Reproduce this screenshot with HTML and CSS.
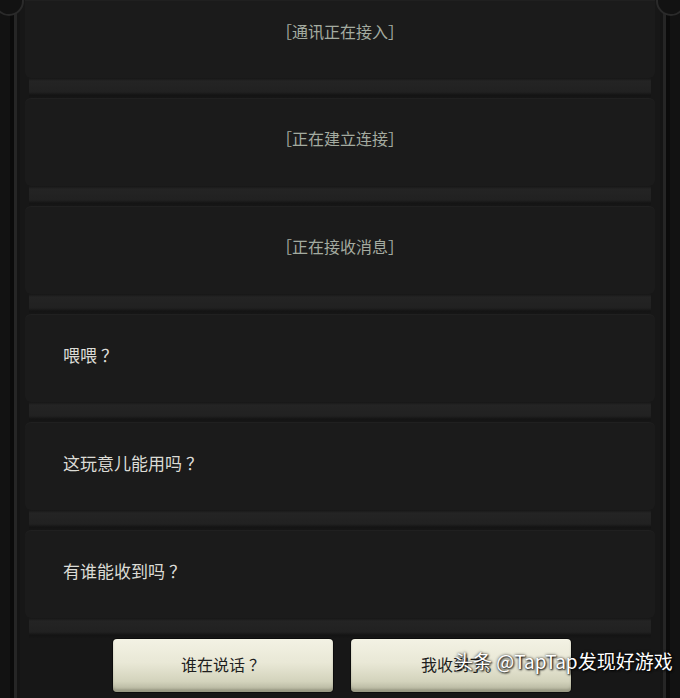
FILE: index.html
```html
<!DOCTYPE html>
<html lang="zh-CN">
    <head>
        <meta charset="UTF-8">
        <meta name="viewport" content="width=device-width, initial-scale=1.0">
        <title>通讯</title>
        <link rel="stylesheet" href="styles.css">
    </head>
    <body>
        <div class="frame">
            <div class="corner corner-left"></div>
            <div class="corner corner-right"></div>

            <div class="log">
                <div class="entry entry-first status"><span>［通讯正在接入］</span></div>
                <div class="band"></div>
                <div class="entry status"><span>［正在建立连接］</span></div>
                <div class="band"></div>
                <div class="entry status"><span>［正在接收消息］</span></div>
                <div class="band"></div>
                <div class="entry message"><span>喂喂<i class="mark">？</i></span></div>
                <div class="band"></div>
                <div class="entry message"><span>这玩意儿能用吗<i class="mark">？</i></span></div>
                <div class="band"></div>
                <div class="entry message"><span>有谁能收到吗<i class="mark">？</i></span></div>
                <div class="band"></div>
            </div>

            <div class="choices">
                <button class="choice">谁在说话<i class="mark">？</i></button>
                <button class="choice">我收到了<i class="mark mark-dot">。</i></button>
            </div>
        </div>

        <div class="watermark">头条 @TapTap发现好游戏</div>
    </body>
</html>
```

FILE: styles.css
```css
/* 通讯面板 */
body {
    margin: 0;
    height: 698px;
    overflow: hidden;
    background-color: #121212;
    font-family: "Noto Sans CJK SC", sans-serif;
    position: relative;
}
.frame {
    position: relative;
    margin: 0 10px;
    height: 698px;
    border-left: 4px solid #0b0b0b;
    border-right: 4px solid #0b0b0b;
    box-shadow: inset 3px 0 0 #262626, inset -3px 0 0 #262626, inset 6px 0 0 #151515, inset -6px 0 0 #151515;
    background-color: #171717;
}
.corner {
    position: absolute;
    top: -14px;
    width: 26px;
    height: 26px;
    border: 2px solid #2a2a2a;
    border-radius: 50%;
    background-color: #121212;
}
.corner-left {
    left: -20px;
}
.corner-right {
    right: -20px;
}
.log {
    display: flex;
    flex-direction: column;
    padding: 0 11px;
}
.entry {
    height: 88px;
    display: flex;
    align-items: center;
    background-color: #1b1b1b;
    border-radius: 6px;
    box-shadow: inset 0 1px 0 #202020;
}
.entry span {
    margin-top: -8px;
}
.entry-first {
    height: 78px;
    border-radius: 0 0 6px 6px;
}
.entry-first span {
    margin-top: -16px;
}
.status {
    justify-content: center;
    color: #a4aba0;
    font-size: 16px;
}
.message {
    padding-left: 38px;
    color: #dcdcd6;
    font-size: 17px;
}
.mark {
    font-style: normal;
    font-family: "Noto Sans CJK JP", sans-serif;
    margin-left: 4px;
}
.mark-dot {
    font-family: "Noto Sans CJK TC", sans-serif;
    margin-left: 0;
}
.band {
    height: 20px;
    margin: 0 4px;
    background: linear-gradient(#161616 0, #242424 3px, #212121 14px, #141414 17px, #161616 20px);
}
.choices {
    display: flex;
    justify-content: center;
    gap: 18px;
    margin-top: 1px;
    padding-left: 4px;
}
.choice {
    width: 220px;
    height: 53px;
    border: none;
    border-radius: 4px;
    background: linear-gradient(#f3f2e4 0, #e9e8d6 45%, #d3d3bc 80%, #aeae98 100%);
    box-shadow: 0 0 0 1px #0c0c0c, inset 0 -3px 2px rgba(120, 120, 100, 0.4);
    color: #1e1e1e;
    font-family: "Noto Sans CJK SC", sans-serif;
    font-size: 16px;
    padding: 0 0 4px;
}
.watermark {
    position: absolute;
    left: 454px;
    top: 645px;
    color: #ffffff;
    font-size: 19px;
    line-height: 32px;
    white-space: nowrap;
    text-shadow: 1px 1px 2px #000000, 0 0 3px rgba(0, 0, 0, 0.8);
}
```
